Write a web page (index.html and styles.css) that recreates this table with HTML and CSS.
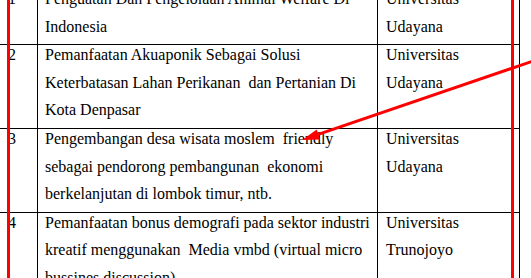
FILE: index.html
```html
<!DOCTYPE html>
<html>
<head>
<meta charset="utf-8">
<link rel="stylesheet" href="styles.css">
</head>
<body>
<div class="page">
  <div class="table">
    <div class="row first">
      <div class="cell num"><div class="in">1</div></div>
      <div class="cell"><div class="in">Penguatan Dan Pengelolaan Animal Welfare Di<br>Indonesia</div></div>
      <div class="cell uni"><div class="in">Universitas<br>Udayana</div></div>
    </div>
    <div class="row">
      <div class="cell num"><div class="in">2</div></div>
      <div class="cell"><div class="in">Pemanfaatan Akuaponik Sebagai Solusi<br>Keterbatasan Lahan Perikanan &nbsp;dan Pertanian Di<br>Kota Denpasar</div></div>
      <div class="cell uni"><div class="in">Universitas<br>Udayana</div></div>
    </div>
    <div class="row">
      <div class="cell num"><div class="in">3</div></div>
      <div class="cell"><div class="in">Pengembangan desa wisata moslem &nbsp;friendly<br>sebagai pendorong pembangunan &nbsp;ekonomi<br>berkelanjutan di lombok timur, ntb.</div></div>
      <div class="cell uni"><div class="in">Universitas<br>Udayana</div></div>
    </div>
    <div class="row">
      <div class="cell num"><div class="in">4</div></div>
      <div class="cell"><div class="in">Pemanfaatan bonus demografi pada sektor industri<br>kreatif menggunakan &nbsp;Media vmbd (virtual micro<br>bussines discussion).</div></div>
      <div class="cell uni"><div class="in">Universitas<br>Trunojoyo</div></div>
    </div>
  </div>
  <svg class="annot" width="531" height="278" viewBox="0 0 531 278" aria-hidden="true">
    <rect x="7" y="0" width="3" height="278" fill="#ff0000"/>
    <rect x="511" y="0" width="3" height="278" fill="#ff0000"/>
    <line x1="545" y1="57" x2="316" y2="135.2" stroke="#ff0000" stroke-width="3"/>
    <polygon points="302,140 320,139.6 316.8,129.6" fill="#ff0000"/>
  </svg>
</div>
</body>
</html>
```
FILE: styles.css
```css
html, body {
  margin: 0;
  padding: 0;
  background: #ffffff;
  overflow: hidden;
}
.page {
  position: relative;
  width: 531px;
  height: 278px;
  overflow: hidden;
}
.table {
  width: 520px;
  margin-top: -11px;
  font-family: "Liberation Serif", "Times New Roman", serif;
  font-size: 16px;
  line-height: 27.6px;
  color: #000;
}
.row {
  display: grid;
  grid-template-columns: 38px 340px 142px;
  border-bottom: 1px solid #000;
}
.cell {
  box-sizing: border-box;
  border-right: 1px solid #000;
  padding: 0 7px;
  white-space: nowrap;
  overflow: hidden;
}
.cell.num {
  padding-left: 8px;
}
.cell.uni {
  padding-left: 8px;
}
.in {
  margin-top: -4px;
  margin-bottom: 4px;
}
.annot {
  position: absolute;
  left: 0;
  top: 0;
  pointer-events: none;
}
```
